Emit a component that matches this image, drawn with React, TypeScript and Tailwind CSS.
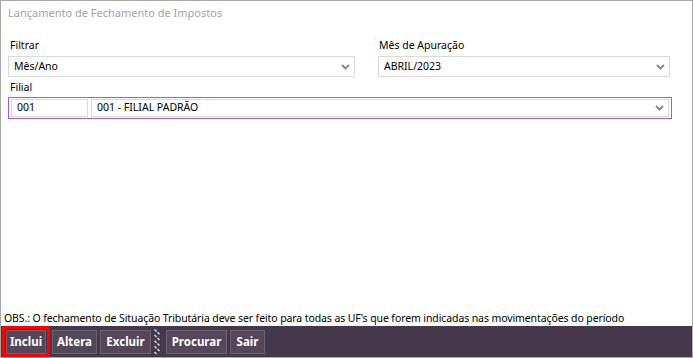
const font = { fontFamily: '"Noto Sans", "Open Sans", sans-serif' };

const Chevron = () => (
  <svg width="9" height="6" viewBox="0 0 9 6" className="shrink-0">
    <path d="M1 1 L4.5 4.5 L8 1" stroke="#8c8c8c" strokeWidth="2" fill="none" />
  </svg>
);

const Select = ({ value, className = '' }: { value: string; className?: string }) => (
  <div
    className={`flex items-center justify-between border border-[#d9d9d9] bg-white pl-[5px] pr-[4px] text-[10.5px] text-black ${className}`}
  >
    <span>{value}</span>
    <Chevron />
  </div>
);

const Button = ({ text, width }: { text: string; width: string }) => (
  <button
    className={`flex h-[24px] items-center justify-center border border-[#6d6272] bg-[#54475a] text-[11.5px] font-bold leading-none text-white ${width}`}
  >
    {text}
  </button>
);

export default function App() {
  return (
    <div style={font} className="flex h-[358px] w-[693px] flex-col border border-[#a9a9a9] bg-white">
      <div className="h-[22px] px-[7px] pt-[3px] text-[11px] leading-[18px] text-[#a3a3a3]">
        Lançamento de Fechamento de Impostos
      </div>

      <div className="mt-[14px] flex gap-[23px] pl-[7px] pr-[22px]">
        <div className="flex w-[347px] flex-col">
          <span className="pl-[2px] text-[10.5px] leading-[17px] text-black">Filtrar</span>
          <Select value="Mês/Ano" className="mt-[2px] h-[21px]" />
        </div>
        <div className="flex flex-1 flex-col">
          <span className="pl-[1px] text-[10.5px] leading-[17px] text-black">Mês de Apuração</span>
          <Select value="ABRIL/2023" className="mt-[2px] h-[21px]" />
        </div>
      </div>

      <div className="mt-[2px] pl-[9px] text-[10.5px] leading-[17px] text-black">Filial</div>
      <div className="ml-[7px] mr-[20px] mt-[1px] flex h-[22px] items-center gap-[3px] border border-solid border-[#a65cd9] px-[2px]">
        <div className="flex h-[18px] w-[77px] items-center border border-[#d9d9d9] pl-[5px] text-[10.5px] text-black">
          001
        </div>
        <Select value="001 - FILIAL PADRÃO" className="h-[18px] flex-1" />
      </div>

      <div className="flex-1" />

      <div className="whitespace-nowrap px-[3px] text-[10.5px] leading-[15px] tracking-[-0.1px] text-black">
        OBS.: O fechamento de Situação Tributária deve ser feito para todas as UF's que forem indicadas nas movimentações do período
      </div>

      <div className="flex h-[31px] items-center bg-[#45384b] pl-[1px]">
        <div className="flex h-[31px] w-[48px] items-center justify-center border-[3px] border-[#ff0000]">
          <Button text="Inclui" width="w-[40px]" />
        </div>
        <div className="ml-[2px]">
          <Button text="Altera" width="w-[45px]" />
        </div>
        <div className="ml-[3px]">
          <Button text="Excluir" width="w-[51px]" />
        </div>
        <svg width="8" height="26" viewBox="0 0 8 26" className="ml-[2px]">
          {Array.from({ length: 9 }).map((_, i) => (
            <path
              key={i}
              d={`M${i % 2 === 0 ? 1.5 : 4.5} ${i * 2.8 + 0.5} l2 2`}
              stroke="#e0e0e0"
              strokeWidth="1.4"
            />
          ))}
        </svg>
        <div className="ml-[5px]">
          <Button text="Procurar" width="w-[61px]" />
        </div>
        <div className="ml-[3px]">
          <Button text="Sair" width="w-[35px]" />
        </div>
      </div>
    </div>
  );
}
